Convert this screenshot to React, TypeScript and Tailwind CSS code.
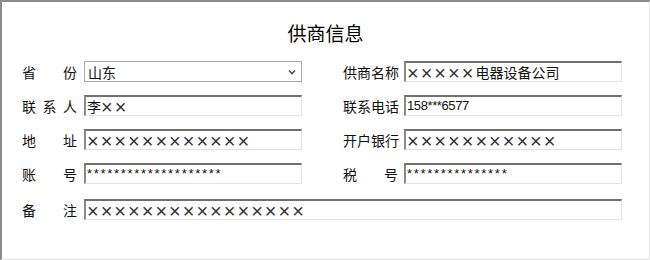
import React from 'react'

const cjk = { fontFamily: '"Noto Sans CJK SC", "Noto Sans", sans-serif' }

function Label({ text }: { text: string }) {
  return (
    <div className="flex w-[55px] shrink-0 justify-between text-[14px] leading-none text-[#111]">
      {text.split('').map((ch, i) => (
        <span key={i}>{ch}</span>
      ))}
    </div>
  )
}

function Field({ children, wide = false }: { children: React.ReactNode; wide?: boolean }) {
  return (
    <div
      className={`flex h-[21px] items-center whitespace-nowrap border-t-2 border-l-2 border-r border-b border-t-[#6f6f6f] border-l-[#8a8a8a] border-r-[#e3e3e3] border-b-[#e3e3e3] bg-white pl-[1px] text-[14px] leading-[16px] text-[#111] ${
        wide ? 'w-[538px]' : 'w-[218px]'
      }`}
    >
      {children}
    </div>
  )
}

// thin full-width crosses, like the masked values in the form
function Crosses({ n }: { n: number }) {
  return (
    <span
      className="relative top-[1px] text-[20px] leading-[16px] tracking-[2px] text-[#333]"
      style={{ fontFamily: '"Liberation Sans", sans-serif' }}
    >
      {'×'.repeat(n)}
    </span>
  )
}

function Stars({ n }: { n: number }) {
  return (
    <span
      className="text-[13px] leading-[16px] tracking-[1.7px]"
      style={{ fontFamily: '"Liberation Sans", sans-serif' }}
    >
      {'*'.repeat(n)}
    </span>
  )
}

export default function App() {
  return (
    <div
      className="h-[260px] w-[650px] bg-white border-t-2 border-l-2 border-r border-b border-t-[#8a8a8a] border-l-[#8a8a8a] border-r-[#e3e3e3] border-b-[#e3e3e3]"
      style={cjk}
    >
      <div className="pt-[19px] text-center text-[19px] leading-[24px] text-black">供商信息</div>

      <div className="mt-[16px] flex flex-col gap-[13px] pl-[20px]">
        <div className="flex items-center">
          <div className="flex items-center gap-[7px]">
            <Label text="省  份" />
            <div className="flex h-[21px] w-[218px] items-center justify-between border border-[#a9a9a9] bg-white pl-[3px] pr-[4px] text-[14px] leading-none text-[#111]">
              <span>山东</span>
              <svg width="10" height="10" viewBox="0 0 10 10">
                <path d="M2 3.5 L5 6.5 L8 3.5" fill="none" stroke="#555" strokeWidth="1.6" />
              </svg>
            </div>
          </div>
          <div className="ml-[41px] flex items-center gap-[6px]">
            <Label text="供商名称" />
            <Field>
              <Crosses n={5} />
              <span>电器设备公司</span>
            </Field>
          </div>
        </div>

        <div className="flex items-center">
          <div className="flex items-center gap-[7px]">
            <Label text="联系人" />
            <Field>
              <span>李</span>
              <Crosses n={2} />
            </Field>
          </div>
          <div className="ml-[41px] flex items-center gap-[6px]">
            <Label text="联系电话" />
            <Field>
              <span
                className="text-[13px] tracking-[-0.4px]"
                style={{ fontFamily: '"Liberation Sans", sans-serif' }}
              >
                158***6577
              </span>
            </Field>
          </div>
        </div>

        <div className="flex items-center">
          <div className="flex items-center gap-[7px]">
            <Label text="地  址" />
            <Field>
              <Crosses n={12} />
            </Field>
          </div>
          <div className="ml-[41px] flex items-center gap-[6px]">
            <Label text="开户银行" />
            <Field>
              <Crosses n={11} />
            </Field>
          </div>
        </div>

        <div className="flex items-center">
          <div className="flex items-center gap-[7px]">
            <Label text="账  号" />
            <Field>
              <Stars n={20} />
            </Field>
          </div>
          <div className="ml-[41px] flex items-center gap-[6px]">
            <Label text="税  号" />
            <Field>
              <Stars n={15} />
            </Field>
          </div>
        </div>

        <div className="mt-[2px] flex items-center gap-[7px]">
          <Label text="备  注" />
          <Field wide>
            <Crosses n={16} />
          </Field>
        </div>
      </div>
    </div>
  )
}
